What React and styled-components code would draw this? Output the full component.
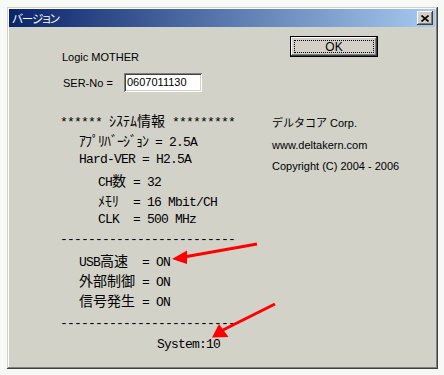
import React from 'react';
import styled, { createGlobalStyle } from 'styled-components';

const GlobalStyle = createGlobalStyle`
  html, body {
    margin: 0;
    padding: 0;
    background: #f7f9f6;
  }
  body {
    font-family: "Liberation Sans", "Noto Sans CJK JP", sans-serif;
    color: #000;
  }
`;

const Page = styled.div`
  position: relative;
  width: 444px;
  height: 375px;
  padding: 7px 0 0 7px;
  box-sizing: border-box;
`;

// ダイアログ本体 (Win2000 風の立体枠)
const Window = styled.div`
  width: 431px;
  height: 362px;
  box-sizing: border-box;
  padding: 2px 3px 2px 2px;
  background: #d2d2c9;
  box-shadow: inset -1px -1px #404040, inset 1px 1px #d4d0c8,
    inset -2px -2px #808080, inset 2px 2px #ffffff;
  display: flex;
  flex-direction: column;
`;

const TitleBar = styled.div`
  height: 18px;
  flex: 0 0 auto;
  display: flex;
  align-items: center;
  justify-content: space-between;
  padding: 0 2px 0 3px;
  background: linear-gradient(to right, #0a246a, #a6caf0);
`;

const Title = styled.span`
  color: #fff;
  font-family: "Noto Sans CJK JP", sans-serif;
  font-size: 11.5px;
  font-feature-settings: "palt";
  letter-spacing: -1px;
  line-height: 18px;
`;

const CloseButton = styled.button`
  width: 16px;
  height: 14px;
  padding: 0;
  border: none;
  background: #d4d0c8;
  box-shadow: inset -1px -1px #404040, inset 1px 1px #ffffff,
    inset -2px -2px #808080, inset 2px 2px #d4d0c8;
  display: flex;
  align-items: center;
  justify-content: center;
`;

const Body = styled.div`
  flex: 1;
  display: flex;
`;

const LeftCol = styled.div`
  flex: 0 0 auto;
  width: 263px;
  box-sizing: border-box;
  padding: 23px 0 0 51px;
`;

const RightCol = styled.div`
  flex: 1;
  padding-top: 9px;
  display: flex;
  flex-direction: column;
  align-items: flex-start;
`;

const Label = styled.div`
  font-size: 11px;
  line-height: 14px;
  margin-left: ${(p) => p.$indent || 0}px;
`;

const SerRow = styled.div`
  display: flex;
  align-items: center;
  margin-top: 9px;
  height: 19px;
`;

const SerLabel = styled.span`
  width: 61px;
  margin-left: 3px;
  font-size: 11px;
`;

const SerInput = styled.div`
  width: 78px;
  height: 19px;
  box-sizing: border-box;
  padding: 0 3px;
  background: #fff;
  font-size: 11px;
  line-height: 19px;
  box-shadow: inset 1px 1px #808080, inset -1px -1px #ffffff,
    inset 2px 2px #404040, inset -2px -2px #d4d0c8;
`;

const MonoBlock = styled.div`
  margin-top: 18px;
  font-family: "Liberation Mono", "Noto Sans CJK JP", monospace;
  font-size: 13px;
  letter-spacing: -0.8px;
`;

const MonoLine = styled.div`
  height: 20px;
  line-height: 20px;
  white-space: pre;
  padding-left: ${(p) => p.$indent || 0}px;
  margin-top: ${(p) => p.$gap || 0}px;
`;

const Wide = styled.span`
  font-family: "Noto Sans CJK JP", sans-serif;
  font-size: 14px;
  letter-spacing: ${(p) => (p.$tight ? -1 : 0)}px;
`;

const OkButton = styled.button`
  margin-left: 18px;
  width: 88px;
  height: 21px;
  padding: 0;
  border: 1px solid #000;
  background: #d4d0c8;
  box-shadow: inset -1px -1px #404040, inset 1px 1px #ffffff,
    inset -2px -2px #808080;
  position: relative;
  font-family: "Liberation Sans", sans-serif;
  font-size: 12px;
  color: #000;

  &::after {
    content: '';
    position: absolute;
    inset: 3px;
    border: 1px dotted #000;
  }
`;

const Info = styled.div`
  margin-top: 56px;
`;

const InfoLine = styled.div`
  font-size: 11px;
  line-height: 21.5px;
  white-space: pre;
`;

const Overlay = styled.svg`
  position: absolute;
  left: 0;
  top: 0;
  pointer-events: none;
`;

// 全角・半角カナを別フォントで描く
const mono = (text, tight) =>
  text.split(/([\u3000-\u9fff\uff00-\uffef]+)/).map((part, i) =>
    /[\u3000-\u9fff\uff00-\uffef]/.test(part) ? (
      <Wide key={i} $tight={tight}>
        {part}
      </Wide>
    ) : (
      part
    )
  );

const lines = [
  { text: '****** ｼｽﾃﾑ情報 *********', indent: 0 },
  { text: 'ｱﾌﾟﾘﾊﾞｰｼﾞｮﾝ = 2.5A', indent: 19, tight: true },
  { text: 'Hard-VER = H2.5A', indent: 19 },
  { text: 'CH数 = 32', indent: 38 },
  { text: 'ﾒﾓﾘ  = 16 Mbit/CH', indent: 38 },
  { text: 'CLK  = 500 MHz', indent: 38 },
  { text: '-------------------------', indent: 0 },
  { text: 'USB高速  = ON', indent: 19 },
  { text: '外部制御 = ON', indent: 19 },
  { text: '信号発生 = ON', indent: 19 },
  { text: '-------------------------', indent: 0, gap: 4 },
  { text: 'System:10', indent: 97, gap: 1 },
];

const App = () => {
  return (
    <Page>
      <GlobalStyle />
      <Window>
        <TitleBar>
          <Title>バージョン</Title>
          <CloseButton aria-label="close">
            <svg width="8" height="7" viewBox="0 0 8 7">
              <path d="M0.5 0.5 L7.5 6.5 M7.5 0.5 L0.5 6.5" stroke="#000" strokeWidth="1.6" />
            </svg>
          </CloseButton>
        </TitleBar>
        <Body>
          <LeftCol>
            <Label $indent={2}>Logic MOTHER</Label>
            <SerRow>
              <SerLabel>SER-No =</SerLabel>
              <SerInput>0607011130</SerInput>
            </SerRow>
            <MonoBlock>
              {lines.map((l, i) => (
                <MonoLine key={i} $indent={l.indent} $gap={l.gap}>
                  {mono(l.text, l.tight)}
                </MonoLine>
              ))}
            </MonoBlock>
          </LeftCol>
          <RightCol>
            <OkButton>OK</OkButton>
            <Info>
              <InfoLine>デルタコア Corp.</InfoLine>
              <InfoLine>www.deltakern.com</InfoLine>
              <InfoLine>Copyright (C) 2004 - 2006</InfoLine>
            </Info>
          </RightCol>
        </Body>
      </Window>
      {/* 赤い矢印 (注釈) */}
      <Overlay width="444" height="375" viewBox="0 0 444 375">
        <line x1="257" y1="244" x2="184" y2="257" stroke="#ff0000" strokeWidth="3" />
        <polygon points="172,259 187,250.5 187,264" fill="#ff0000" />
        <line x1="275" y1="304" x2="221" y2="331" stroke="#ff0000" strokeWidth="3" />
        <polygon points="212,337.5 228.5,337 219,324" fill="#ff0000" />
      </Overlay>
    </Page>
  );
};

export default App;
